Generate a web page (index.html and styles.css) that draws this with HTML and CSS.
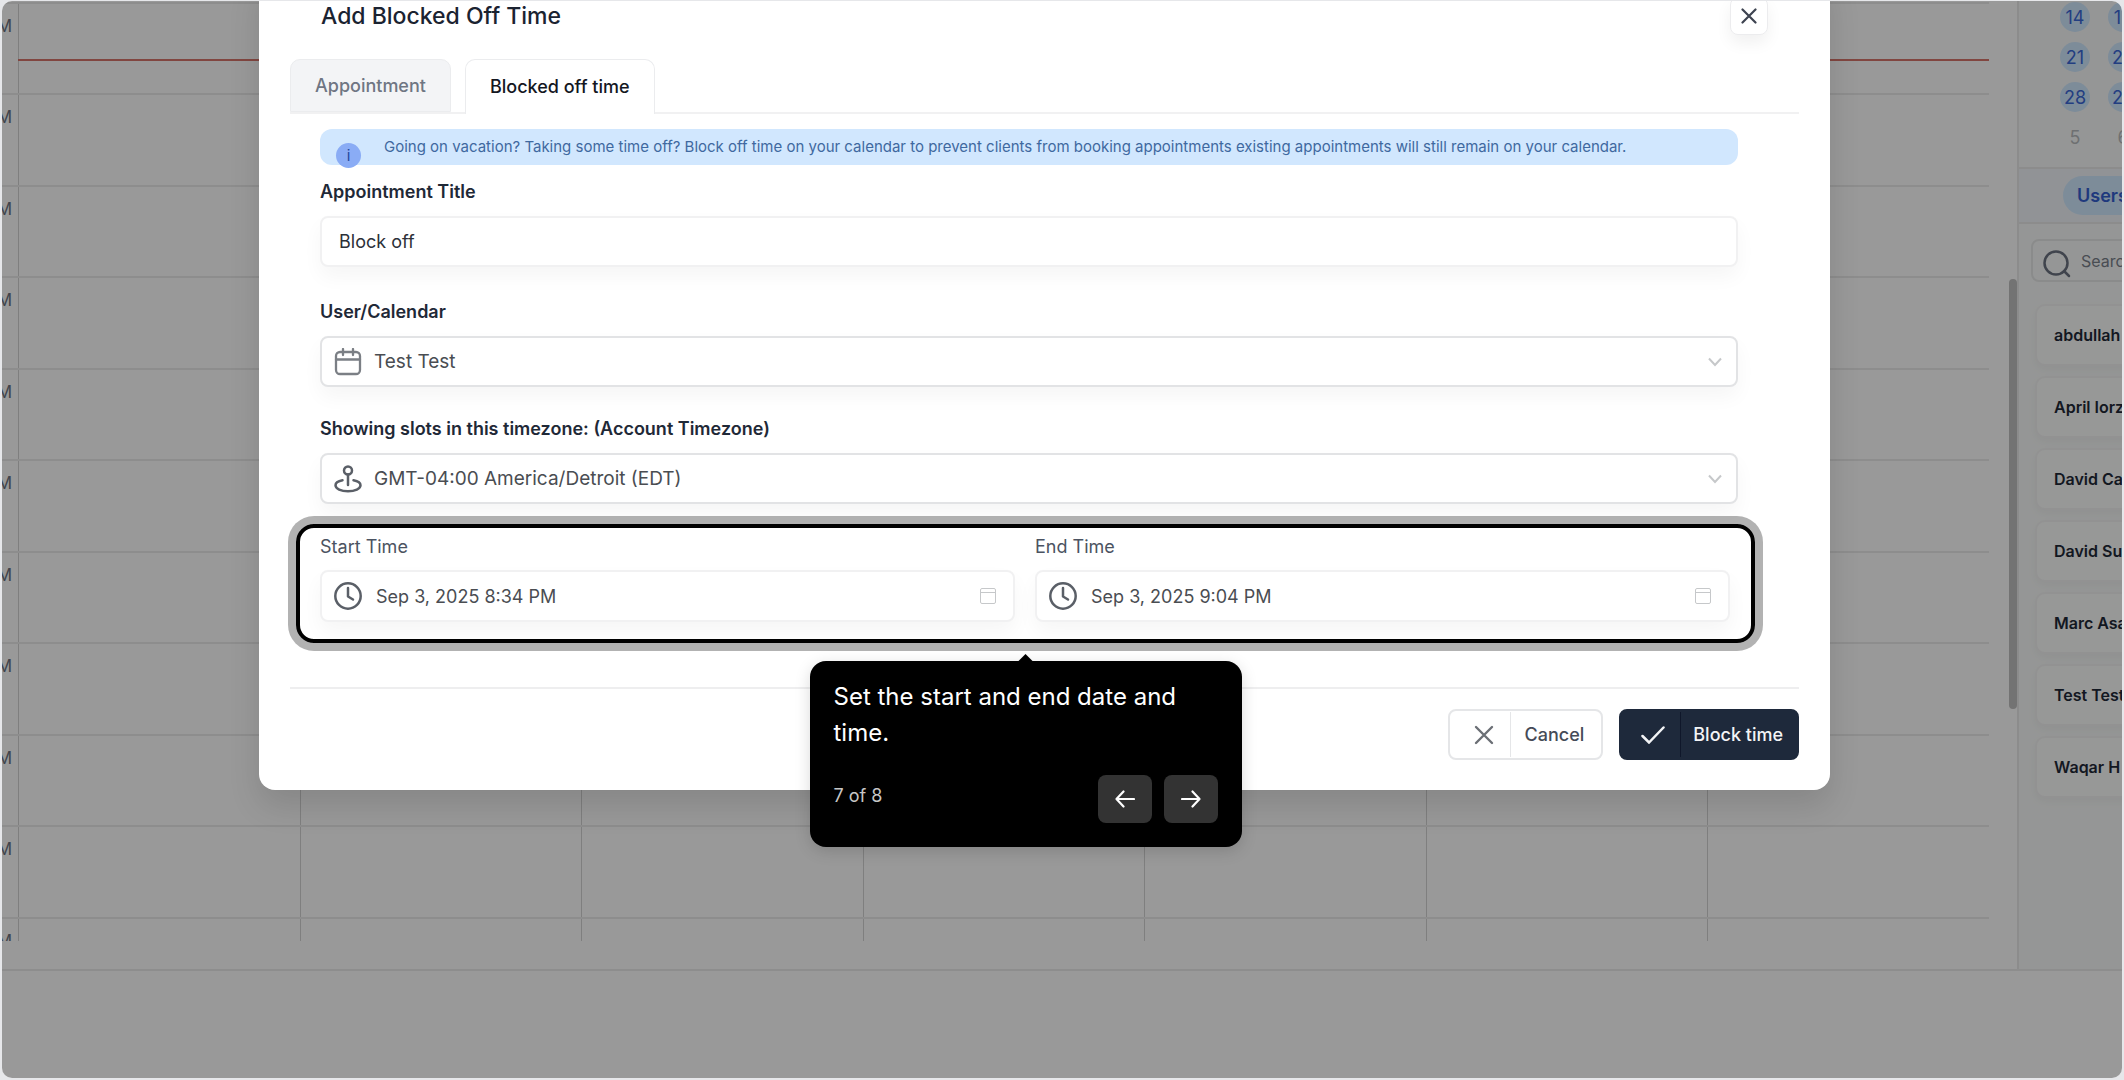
FILE: index.html
```html
<!DOCTYPE html>
<html lang="en">
<head>
<meta charset="utf-8">
<title>Add Blocked Off Time</title>
<link rel="stylesheet" href="styles.css">
</head>
<body>
<div class="app">
  <div class="workspace">
    <main class="calendar">
      <div class="hours">
        <div class="now-line"></div>
        <div class="hour"><span class="time">PM</span><i></i><i></i><i></i><i></i><i></i><i></i><i></i></div>
        <div class="hour"><span class="time">PM</span><i></i><i></i><i></i><i></i><i></i><i></i><i></i></div>
        <div class="hour"><span class="time">PM</span><i></i><i></i><i></i><i></i><i></i><i></i><i></i></div>
        <div class="hour"><span class="time">PM</span><i></i><i></i><i></i><i></i><i></i><i></i><i></i></div>
        <div class="hour"><span class="time">PM</span><i></i><i></i><i></i><i></i><i></i><i></i><i></i></div>
        <div class="hour"><span class="time">PM</span><i></i><i></i><i></i><i></i><i></i><i></i><i></i></div>
        <div class="hour"><span class="time">PM</span><i></i><i></i><i></i><i></i><i></i><i></i><i></i></div>
        <div class="hour"><span class="time">PM</span><i></i><i></i><i></i><i></i><i></i><i></i><i></i></div>
        <div class="hour"><span class="time">PM</span><i></i><i></i><i></i><i></i><i></i><i></i><i></i></div>
        <div class="hour"><span class="time">PM</span><i></i><i></i><i></i><i></i><i></i><i></i><i></i></div>
        <div class="hour"><span class="time">PM</span><i></i><i></i><i></i><i></i><i></i><i></i><i></i></div>
      </div>
      <div class="scrollbar"></div>
    </main>
    <aside class="sidebar">
      <div class="month">
        <span class="day">14</span><span class="day">15</span>
        <span class="day">21</span><span class="day">22</span>
        <span class="day">28</span><span class="day">29</span>
        <span class="day next">5</span><span class="day next">6</span>
      </div>
      <div class="filters"><button class="pill" type="button">Users</button></div>
      <label class="search">
        <svg width="28" height="28" viewBox="0 0 28 28" fill="none" stroke="currentColor" stroke-width="2.500"><circle cx="13" cy="13" r="11.500"/><path d="M21 21l5 5" stroke-linecap="round"/></svg>
        <input type="text" placeholder="Search" aria-label="Search">
      </label>
      <ul class="users">
        <li>abdullah</li>
        <li>April Iorz</li>
        <li>David Ca</li>
        <li>David Su</li>
        <li>Marc Asa</li>
        <li>Test Test</li>
        <li>Waqar H</li>
      </ul>
    </aside>
  </div>

  <div class="overlay">
    <form class="dialog" role="dialog" aria-labelledby="dialog-title">
      <header class="dialog-head">
        <h1 id="dialog-title">Add Blocked Off Time</h1>
        <button class="close" type="button" aria-label="Close"><svg width="16" height="16" viewBox="0 0 16 16" fill="none" stroke="currentColor" stroke-width="2.200" stroke-linecap="round"><path d="M1.500 1.500l13 13M14.500 1.500l-13 13"/></svg></button>
      </header>
      <div class="tabs" role="tablist">
        <button class="tab" type="button" role="tab">Appointment</button>
        <button class="tab active" type="button" role="tab" aria-selected="true">Blocked off time</button>
      </div>
      <div class="dialog-body">
        <p class="notice">
          <span class="info">i</span>
          Going on vacation? Taking some time off? Block off time on your calendar to prevent clients from booking appointments existing appointments will still remain on your calendar.
        </p>
        <div class="field title-field">
          <label for="title">Appointment Title</label>
          <div class="control light"><input id="title" type="text" value="Block off"></div>
        </div>
        <div class="field">
          <label for="user">User/Calendar</label>
          <div class="control">
            <svg class="icon" width="28" height="28" viewBox="0 0 28 28" fill="none" stroke="#7b7f85" stroke-width="2.300" stroke-linecap="round"><rect x="2" y="4" width="24" height="22" rx="4"/><path d="M2 11.500h24M9 1v6M19 1v6"/></svg>
            <select id="user"><option>Test Test</option></select>
            <svg width="14" height="10" viewBox="0 0 14 10" fill="none" stroke="#c6c8ca" stroke-width="2"><path d="M1 1.500l6 6.500 6-6.500"/></svg>
          </div>
        </div>
        <div class="field">
          <label for="zone">Showing slots in this timezone: (Account Timezone)</label>
          <div class="control">
            <svg class="icon" width="28" height="28" viewBox="0 0 28 28" fill="none" stroke="#5a5f67" stroke-width="2.500" stroke-linecap="round"><circle cx="14" cy="5.500" r="4"/><path d="M14 9.500V20M8.500 15.200C4 16 1.500 18 1.500 20.300c0 3.500 5.500 6 12.500 6s12.500-2.500 12.500-6c0-2.300-2.500-4.300-7-5.100"/></svg>
            <select id="zone"><option>GMT-04:00 America/Detroit (EDT)</option></select>
            <svg width="14" height="10" viewBox="0 0 14 10" fill="none" stroke="#c6c8ca" stroke-width="2"><path d="M1 1.500l6 6.500 6-6.500"/></svg>
          </div>
        </div>
        <div class="times">
          <div class="time-field">
            <label for="start">Start Time</label>
            <div class="control light">
              <svg class="icon" width="28" height="28" viewBox="0 0 28 28" fill="none" stroke="#5a5f67" stroke-width="2.500" stroke-linecap="round" stroke-linejoin="round"><circle cx="14" cy="14" r="12.700"/><path d="M14 6v8.500l5 3"/></svg>
              <input id="start" type="text" value="Sep 3, 2025 8:34 PM">
              <svg class="picker" width="16" height="16" viewBox="0 0 16 16" fill="none" stroke="#c6c8ca"><rect x=".5" y=".5" width="15" height="15" rx="1.500"/><path d="M.5 4.500h15"/></svg>
            </div>
          </div>
          <div class="time-field">
            <label for="end">End Time</label>
            <div class="control light">
              <svg class="icon" width="28" height="28" viewBox="0 0 28 28" fill="none" stroke="#5a5f67" stroke-width="2.500" stroke-linecap="round" stroke-linejoin="round"><circle cx="14" cy="14" r="12.700"/><path d="M14 6v8.500l5 3"/></svg>
              <input id="end" type="text" value="Sep 3, 2025 9:04 PM">
              <svg class="picker" width="16" height="16" viewBox="0 0 16 16" fill="none" stroke="#c6c8ca"><rect x=".5" y=".5" width="15" height="15" rx="1.500"/><path d="M.5 4.500h15"/></svg>
            </div>
          </div>
          <div class="tour" role="tooltip">
            <p>Set the start and end date and time.</p>
            <div class="tour-foot">
              <span>7 of 8</span>
              <button type="button" aria-label="Previous step"><svg width="20" height="18" viewBox="0 0 20 18" fill="none" stroke="currentColor" stroke-width="2.200" stroke-linecap="round" stroke-linejoin="round"><path d="M19 9H1.500M8.500 1.500L1.500 9l7 7.500"/></svg></button>
              <button type="button" aria-label="Next step"><svg width="20" height="18" viewBox="0 0 20 18" fill="none" stroke="currentColor" stroke-width="2.200" stroke-linecap="round" stroke-linejoin="round"><path d="M1 9h17.500M11.500 1.500l7 7.500-7 7.500"/></svg></button>
            </div>
          </div>
        </div>
      </div>
      <footer class="dialog-foot">
        <button class="btn" type="button">
          <span class="btn-icon"><svg width="20" height="20" viewBox="0 0 20 20" fill="none" stroke="#6b6f75" stroke-width="2.400" stroke-linecap="round"><path d="M2 2l16 16M18 2L2 18"/></svg></span>
          <span class="btn-text">Cancel</span>
        </button>
        <button class="btn primary" type="submit">
          <span class="btn-icon"><svg width="24" height="18" viewBox="0 0 24 18" fill="none" stroke="currentColor" stroke-width="2.500" stroke-linecap="round"><path d="M1.500 10l6.500 6.500L22.500 1.500"/></svg></span>
          <span class="btn-text">Block time</span>
        </button>
      </footer>
    </form>
  </div>
</div>
</body>
</html>
```
FILE: styles.css
```css
* { box-sizing: border-box; }

body {
  margin: 0;
  padding: 1px 2px 2px;
  background: #e6e7ea;
  color: #1f2937;
  font-family: Inter, "Liberation Sans", sans-serif;
  font-size: 18px;
}

button, input, select { font: inherit; color: inherit; }
input, select { min-width: 0; padding: 0; border: 0; outline: 0; background: none; appearance: none; }
svg { display: block; flex: none; }
p, h1, ul { margin: 0; padding: 0; }

.app {
  position: relative;
  min-height: calc(100vh - 3px);
  border-radius: 10px;
  background: #fff;
  overflow: hidden;
}

/* Calendar behind the dialog */
.workspace { display: flex; height: 970px; border-bottom: 2px solid #ebebeb; }
.calendar { display: flex; flex: 1; justify-content: space-between; }
.hours { position: relative; flex: 1; height: 940px; margin-right: 20px; padding-top: 1px; overflow: hidden; }
.hour { display: grid; grid-template-columns: 16px repeat(7, 1fr); height: 91px; border-top: 2px solid #ebebeb; }
.hour:nth-child(odd) { height: 92px; }
.hour i { border-left: 1px solid #d4d4d4; }
.time { display: flex; justify-content: flex-end; width: 10px; padding-top: 11px; color: #6b7280; font-size: 17px; line-height: 22px; }
.now-line { position: absolute; top: 58px; right: 0; left: 16px; height: 2px; background: #d8756c; }
.scrollbar { align-self: flex-start; width: 8px; height: 430px; margin-top: 278px; border-radius: 4px; background: #c0c0c0; }

.sidebar { flex: none; width: 105px; border-left: 2px solid #e9eaea; background: #f9fbfa; overflow: hidden; }
.month { display: grid; grid-template-columns: 30px 30px; gap: 10px 18px; width: 200px; padding: 1px 0 15px 41px; }
.day { display: flex; align-items: center; justify-content: center; height: 30px; border-radius: 50%; background: #d1e9ff; color: #3a68d8; }
.day.next { background: none; color: #b8bbbe; }
.filters { width: 200px; padding: 7px 0 7px 44px; border-top: 2px solid #e9eaea; border-bottom: 2px solid #e9eaea; background: #f2f6fb; }
.pill { height: 39px; padding: 0 14px; border: 0; border-radius: 20px; background: #d1e9ff; color: #3560d0; font-weight: 600; }
.search { display: flex; align-items: center; gap: 10px; width: 200px; height: 43px; margin: 15px 0 22px 12px; padding: 0 10px; border: 2px solid #e6e8e8; border-radius: 8px; color: #6b7280; }
.search svg { margin-top: 6px; }
.search input { font-size: 16px; }
.search input::placeholder { color: #7a808a; opacity: 1; }
.users { display: flex; flex-direction: column; gap: 10px; width: 200px; padding-left: 16px; list-style: none; }
.users li { height: 62px; padding-left: 17px; border: 2px solid #f3f4f4; border-radius: 10px; background: #fcfdfc; box-shadow: 0 4px 10px rgba(0, 0, 0, .04); font-size: 16px; font-weight: 600; line-height: 58px; white-space: nowrap; }

/* Dialog */
.overlay { position: absolute; inset: 0; background: rgba(0, 0, 0, .4); }
.dialog { margin: -28px 292px 0 257px; padding: 0 31px 30px; border-radius: 16px; background: #fff; box-shadow: 0 16px 32px rgba(0, 0, 0, .12); }
.dialog-head { display: flex; align-items: center; justify-content: space-between; height: 86px; padding: 0 31px; }
h1 { color: #1b2331; font-size: 23px; font-weight: 500; }
.close { display: grid; place-items: center; width: 38px; height: 38px; padding: 0; border: 1px solid #ececee; border-radius: 8px; background: #fff; box-shadow: 0 8px 16px rgba(0, 0, 0, .06); color: #3d4350; }

.tabs { display: flex; gap: 14px; height: 55px; border-bottom: 2px solid #f1f1f2; }
.tab { padding: 0 24px; border: 1px solid #ebecee; border-radius: 10px 10px 0 0; background: #f3f4f6; color: #6f7683; font-weight: 500; }
.tab.active { margin-bottom: -2px; padding-bottom: 2px; border-bottom: 0; background: #fff; color: #14171f; }

.dialog-body { padding: 15px 61px 44px 30px; }
.notice { position: relative; height: 36px; padding-left: 64px; border-radius: 12px; background: #d1e7fe; color: #3f69a0; font-size: 15px; line-height: 36px; white-space: nowrap; }
.info { position: absolute; top: 14px; left: 16px; width: 25px; height: 25px; border-radius: 50%; background: #8aacf5; color: #23489c; line-height: 25px; text-align: center; }

.field { margin-top: 30px; }
.field label, .time-field label { display: block; margin-bottom: 12px; line-height: 24px; }
.field label { font-weight: 600; }
.title-field { margin: 15px 0 33px; }
.control { display: flex; align-items: center; height: 51px; padding: 0 14px 0 12px; border: 2px solid #e2e3e5; border-radius: 8px; background: #fff; box-shadow: 0 10px 20px rgba(0, 0, 0, .04); color: #4a4d52; }
.control.light { padding: 0 17px; border-color: #f1f1f2; color: #2c3038; }
.control input, .control select { flex: 1; height: 100%; }
.control select { font-size: 19px; }
.icon { margin-right: 12px; }

.times { position: relative; display: grid; grid-template-columns: 1fr 1fr; gap: 20px; margin: 20px -17px 0 -24px; padding: 7px 21px 17px 20px; border: 4px solid #000; border-radius: 18px; box-shadow: 0 0 0 8px rgba(0, 0, 0, .3); }
.time-field label { margin-bottom: 11px; color: #4b5361; }
.time-field .control { height: 52px; padding-left: 12px; color: #4a4d52; }
.time-field .icon { margin-right: 14px; }

/* Tour step */
.tour { position: absolute; top: calc(100% + 22px); left: 50%; width: 432px; margin-left: -216px; padding: 18px 24px 24px; border-radius: 16px; background: #000; box-shadow: 0 4px 16px rgba(0, 0, 0, .15); color: #fff; }
.tour::before { content: ""; position: absolute; top: -7px; left: 50%; width: 16px; height: 8px; margin-left: -8px; background: #000; clip-path: polygon(50% 0, 100% 100%, 0 100%); }
.tour p { font-size: 24px; line-height: 36px; }
.tour-foot { display: flex; gap: 12px; margin-top: 24px; }
.tour-foot span { flex: 1; color: #c6c6c6; line-height: 42px; }
.tour-foot button { display: grid; place-items: center; width: 54px; height: 48px; padding: 0; border: 0; border-radius: 8px; background: #333; color: #fff; }

.dialog-foot { display: flex; justify-content: flex-end; gap: 16px; padding-top: 20px; border-top: 2px solid #eeeeef; }
.btn { display: flex; align-items: center; height: 51px; padding: 0; border: 2px solid #e5e6e8; border-radius: 8px; background: #fff; color: #454b57; font-weight: 500; }
.btn-icon { display: grid; place-items: center; width: 61px; height: 45px; padding-left: 8px; border-right: 1px solid #e5e6e8; }
.btn-text { padding: 0 17px 0 14px; }
.primary { border-color: #1e293b; background: #1e293b; color: #f3f4f6; }
.primary .btn-icon { width: 60px; padding-left: 4px; border-color: #0f172a; }
.primary .btn-text { padding: 0 14px 0 12px; }
```
